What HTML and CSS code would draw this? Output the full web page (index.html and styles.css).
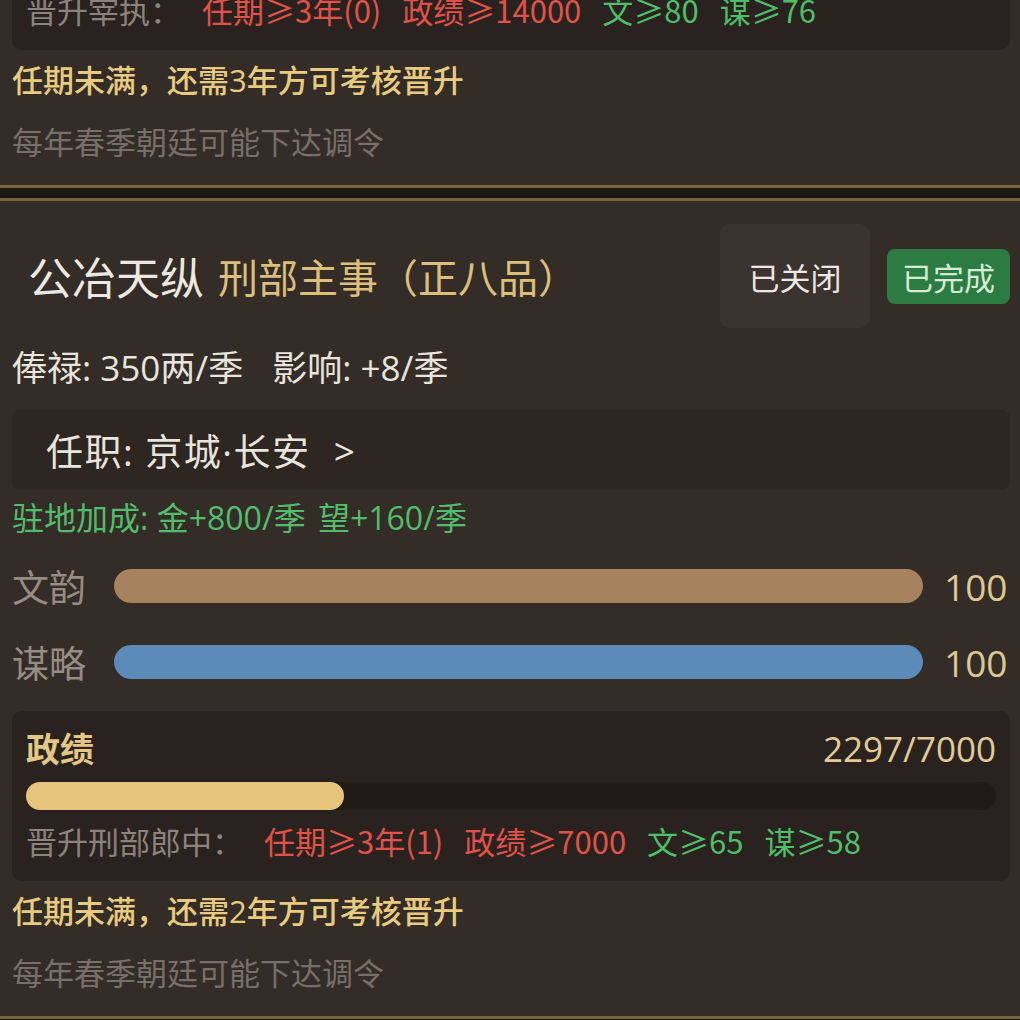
FILE: index.html
```html
<!DOCTYPE html>
<html lang="zh-CN">
<head>
  <meta charset="UTF-8" />
  <meta name="viewport" content="width=device-width, initial-scale=1.0"/>
  <title>官职</title>
  <link rel="stylesheet" href="styles.css">
</head>
<body>

  <div class="office-list">

    <!-- 上一张：只露出底部 -->
    <section class="office-card office-card--cut">
      <div class="merit merit--cut">
        <p class="promo">
          <span class="promo-label">晋升宰执：</span>
          <span class="req req-fail">任期≥3年(0)</span>
          <span class="req req-fail">政绩≥14000</span>
          <span class="req req-ok">文≥80</span>
          <span class="req req-ok">谋≥76</span>
        </p>
      </div>
      <p class="notice">任期未满，还需3年方可考核晋升</p>
      <p class="tip">每年春季朝廷可能下达调令</p>
    </section>

    <section class="office-card">
      <header class="card-head">
        <span class="name">公冶天纵</span>
        <span class="rank">刑部主事（正八品）</span>
        <div class="actions">
          <button class="btn-closed">已关闭</button>
          <span class="badge-done">已完成</span>
        </div>
      </header>

      <p class="stats">
        <span>俸禄: 350两/季</span>
        <span class="stats-gap">影响: +8/季</span>
      </p>

      <div class="post">任职: 京城·长安 <span class="chevron">&gt;</span></div>

      <p class="bonus">驻地加成: 金+800/季 <span class="bonus-gap">望+160/季</span></p>

      <div class="attr">
        <span class="attr-label">文韵</span>
        <div class="attr-bar attr-bar--wen"></div>
        <span class="attr-value">100</span>
      </div>
      <div class="attr">
        <span class="attr-label">谋略</span>
        <div class="attr-bar attr-bar--mou"></div>
        <span class="attr-value">100</span>
      </div>

      <div class="merit">
        <div class="merit-head">
          <span class="merit-title">政绩</span>
          <span class="merit-count">2297/7000</span>
        </div>
        <div class="track"><div class="track-fill" style="width: 32.8%"></div></div>
        <p class="promo">
          <span class="promo-label">晋升刑部郎中：</span>
          <span class="req req-fail">任期≥3年(1)</span>
          <span class="req req-fail">政绩≥7000</span>
          <span class="req req-ok">文≥65</span>
          <span class="req req-ok">谋≥58</span>
        </p>
      </div>

      <p class="notice">任期未满，还需2年方可考核晋升</p>
      <p class="tip">每年春季朝廷可能下达调令</p>
    </section>

  </div>

</body>
</html>
```

FILE: styles.css
```css
* { margin: 0; padding: 0; box-sizing: border-box; }
body {
  background-color: #1c1813;
  font-family: "Open Sans", "Noto Sans CJK SC", sans-serif;
  color: #e8e4de;
  overflow: hidden;
}

/* list is scrolled a bit, first card is half off screen */
.office-list {
  display: flex;
  flex-direction: column;
  gap: 10px;
  margin-top: -28px;
}
.office-card {
  background-color: #342c26;
  border-top: 3px solid #76653f;
  border-bottom: 3px solid #76653f;
  padding: 23px 10px 21px 12px;
}
.office-card--cut {
  border-top: none;
  padding-top: 0;
}

/* header */
.card-head {
  display: flex;
  align-items: center;
}
.name {
  font-size: 44px;
  color: #ece8e2;
  padding-left: 16px;
}
.rank {
  font-size: 40px;
  color: #dcbf7d;
  margin-left: 14px;
}
.actions {
  margin-left: auto;
  display: flex;
  align-items: center;
  gap: 17px;
}
.btn-closed {
  width: 150px;
  height: 104px;
  border: none;
  border-radius: 10px;
  background-color: #3b332d;
  color: #ebe7e2;
  font-family: inherit;
  font-size: 31px;
}
.badge-done {
  display: flex;
  align-items: center;
  justify-content: center;
  width: 123px;
  height: 55px;
  border-radius: 8px;
  background-color: #2c7b42;
  color: #d4ecd5;
  font-size: 31px;
}

.stats {
  margin-top: 18px;
  font-size: 35px;
  line-height: 44px;
}
.stats-gap { margin-left: 20px; }

.post {
  display: flex;
  align-items: center;
  height: 80px;
  margin-top: 20px;
  padding-left: 34px;
  background-color: #2d2621;
  border-radius: 8px;
  font-size: 37px;
  letter-spacing: 1.5px;
  white-space: pre;
}
.chevron { margin-left: 12px; }

.bonus {
  margin-top: 8px;
  font-size: 32px;
  line-height: 40px;
  color: #52bd6c;
}
.bonus-gap { margin-left: 4px; }

/* attribute bars */
.attr {
  display: flex;
  align-items: center;
  height: 56px;
  margin-top: 20px;
}
.attr-label {
  flex: none;
  white-space: nowrap;
  font-size: 37px;
  color: #958c83;
}
.attr-bar {
  flex: 1;
  height: 34px;
  margin: 0 21px 0 28px;
  border-radius: 17px;
}
.attr-bar--wen { background-color: #a6835e; }
.attr-bar--mou { background-color: #5b8bb9; }
.attr-value {
  flex: none;
  width: 66px;
  font-size: 37px;
  color: #dcc796;
}

/* merit box */
.merit {
  margin-top: 21px;
  padding: 16px 14px 18px;
  background-color: #29221e;
  border-radius: 10px;
}
.merit--cut { margin-top: 0; }
.merit-head {
  display: flex;
  justify-content: space-between;
  align-items: center;
  line-height: 44px;
}
.merit-title {
  font-size: 34px;
  font-weight: 700;
  color: #e3c787;
}
.merit-count {
  font-size: 35px;
  color: #e0cb98;
}
.track {
  height: 28px;
  margin-top: 11px;
  background-color: #211b17;
  border-radius: 14px;
}
.track-fill {
  height: 100%;
  background-color: #e6c47c;
  border-radius: 14px;
}
.promo {
  margin-top: 9px;
  font-family: "Noto Sans CJK SC", sans-serif;
  font-size: 31px;
  line-height: 44px;
  color: #8c847c;
}
.merit--cut .promo { margin-top: 0; }
.req { margin-left: 14px; }
.req:first-of-type { margin-left: 12px; }
.req-fail { color: #e0524a; }
.req-ok { color: #4fbe6b; }

.notice {
  margin-top: 8px;
  font-size: 31px;
  font-weight: 500;
  line-height: 44px;
  color: #e7cb80;
}
.tip {
  margin-top: 18px;
  font-size: 31px;
  line-height: 44px;
  color: #776f68;
}
```
